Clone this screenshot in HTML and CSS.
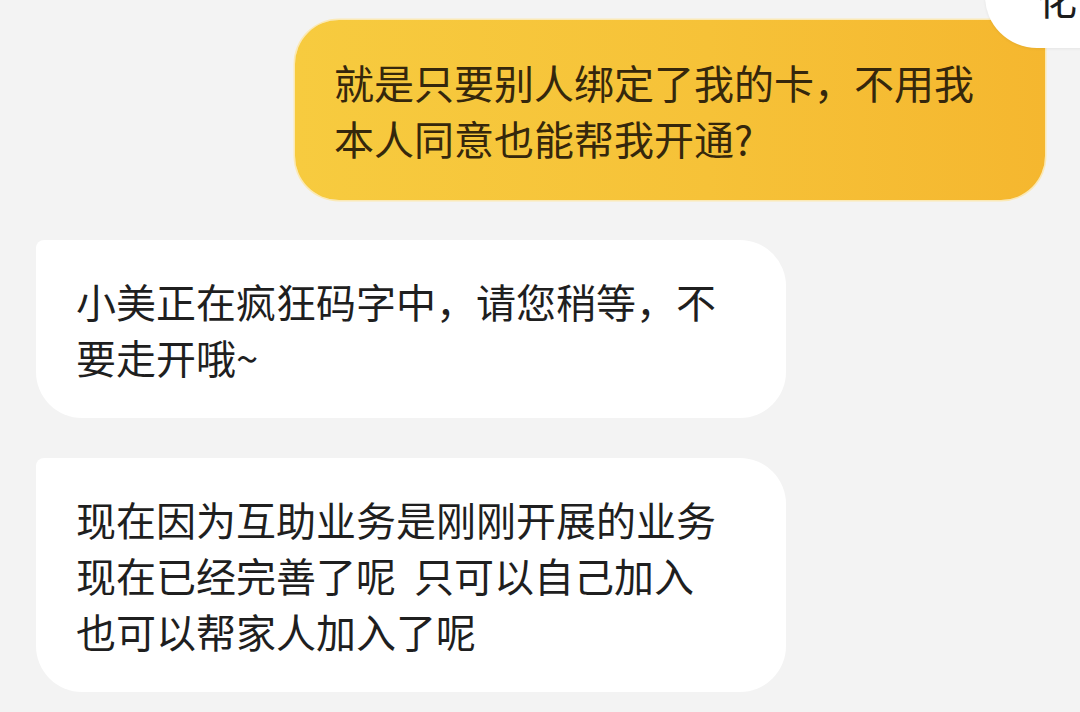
FILE: index.html
```html
<!DOCTYPE html>
<html lang="zh-CN">
<head>
<meta charset="utf-8">
<title>聊天</title>
<link rel="stylesheet" href="styles.css">
</head>
<body>
<div class="chat">
  <div class="corner-tag"><span class="corner-text">化</span></div>
  <div class="bubble bubble-me">就是只要别人绑定了我的卡，不用我<br>本人同意也能帮我开通?</div>
  <div class="bubble bubble-bot">小美正在疯狂码字中，请您稍等，不<br>要走开哦~</div>
  <div class="bubble bubble-bot">现在因为互助业务是刚刚开展的业务<br>现在已经完善了呢&nbsp;&nbsp;只可以自己加入<br>也可以帮家人加入了呢</div>
</div>
</body>
</html>
```

FILE: styles.css
```css
html, body {
  margin: 0;
  padding: 0;
}
body {
  background: #f3f3f3;
  width: 1080px;
  height: 712px;
  overflow: hidden;
  font-family: "Noto Sans CJK SC", "Noto Sans", sans-serif;
}
.chat {
  position: relative;
  display: flex;
  flex-direction: column;
  gap: 40px;
  padding-top: 20px;
}
.bubble {
  box-sizing: border-box;
  width: 750px;
  font-size: 40px;
  line-height: 56px;
  padding: 33px 40px;
  letter-spacing: 0;
}
.bubble-me {
  align-self: flex-end;
  margin-right: 35px;
  padding-left: 39px;
  padding-top: 34px;
  padding-bottom: 34px;
  color: #35270c;
  background: linear-gradient(90deg, #f7cb3f 0%, #f6c238 55%, #f5b72f 100%);
  border-radius: 44px 10px 44px 44px;
  box-shadow: 0 0 0 1.5px #fbe9b5;
}
.bubble-bot {
  align-self: flex-start;
  margin-left: 36px;
  color: #1f1f1f;
  background: #ffffff;
  border-radius: 8px 46px 46px 46px;
}
.corner-tag {
  position: absolute;
  top: -60px;
  right: -40px;
  width: 135px;
  height: 108px;
  background: #ffffff;
  border-radius: 0 0 0 52px;
  box-shadow: 0 1px 3px rgba(0,0,0,0.06);
  overflow: hidden;
}
.corner-text {
  position: absolute;
  left: 52px;
  top: 38px;
  font-size: 40px;
  line-height: 40px;
  color: #1c1c1c;
}
```
